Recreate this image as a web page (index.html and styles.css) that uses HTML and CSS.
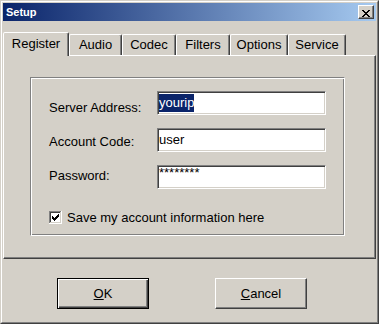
FILE: index.html
```html
<!DOCTYPE html>
<html lang="en">
<head>
    <meta charset="UTF-8">
    <title>Setup</title>
    <link rel="stylesheet" href="styles.css">
</head>
<body>
    <div class="window">
        <div class="frame">
            <div class="titlebar">
                <span class="title">Setup</span>
                <button class="close-button" title="Close">
                    <svg width="8" height="7" viewBox="0 0 8 7" shape-rendering="crispEdges">
                        <path fill="#000" d="M0 0h2v1H0zM6 0h2v1H6zM1 1h2v1H1zM5 1h2v1H5zM2 2h4v1H2zM3 3h2v1H3zM2 4h4v1H2zM1 5h2v1H1zM5 5h2v1H5zM0 6h2v1H0zM6 6h2v1H6z"/>
                    </svg>
                </button>
            </div>

            <div class="tabs">
                <div class="tab tab-register active">Register</div>
                <div class="tab tab-audio">Audio</div>
                <div class="tab tab-codec">Codec</div>
                <div class="tab tab-filters">Filters</div>
                <div class="tab tab-options">Options</div>
                <div class="tab tab-service">Service</div>
            </div>

            <div class="panel">
                <div class="group">
                    <div class="fields">
                        <div class="labels">
                            <label for="server">Server Address:</label>
                            <label for="account">Account Code:</label>
                            <label for="password">Password:</label>
                        </div>
                        <div class="edits">
                            <div class="edit" id="server"><span class="selected">yourip</span></div>
                            <div class="edit" id="account">user</div>
                            <div class="edit masked" id="password">********</div>
                        </div>
                    </div>
                    <div class="check-row">
                        <svg class="checkbox" width="13" height="13" viewBox="0 0 13 13" shape-rendering="crispEdges">
                            <path fill="#808080" d="M0 0h12v1H1v11H0z"/>
                            <path fill="#404040" d="M1 1h10v1H2v9H1z"/>
                            <path fill="#fff" d="M12 0h1v13H0v-1h12z"/>
                            <path fill="#D4D0C8" d="M11 1h1v11H1v-1h10z"/>
                            <rect x="2" y="2" width="9" height="9" fill="#fff"/>
                            <path fill="#000" d="M3 5h1v3H3zM4 6h1v3H4zM5 7h1v3H5zM6 6h1v3H6zM7 5h1v3H7zM8 4h1v3H8zM9 3h1v3H9z"/>
                        </svg>
                        <span>Save my account information here</span>
                    </div>
                </div>
            </div>

            <div class="buttons">
                <button class="btn btn-default"><u>O</u>K</button>
                <button class="btn"><u>C</u>ancel</button>
            </div>
        </div>
    </div>
</body>
</html>
```

FILE: styles.css
```css
* {
    margin: 0;
    padding: 0;
    box-sizing: border-box;
}
body {
    font-family: "Liberation Sans", Arial, sans-serif;
    font-size: 13px;
    color: #000;
    background: #D4D0C8;
    overflow: hidden;
}
.window {
    width: 379px;
    height: 324px;
    background: #D4D0C8;
    border: 1px solid;
    border-color: #D4D0C8 #404040 #404040 #D4D0C8;
}
.frame {
    height: 100%;
    border: 1px solid;
    border-color: #fff #808080 #808080 #fff;
    padding: 1px;
    display: flex;
    flex-direction: column;
}
/* Title bar */
.titlebar {
    flex: none;
    height: 18px;
    background: linear-gradient(to right, #0A246A, #A6CAF0);
    display: flex;
    align-items: center;
    justify-content: space-between;
    padding: 0 2px 0 3px;
}
.title {
    color: #fff;
    font-weight: bold;
    font-size: 11px;
    line-height: 18px;
}
.close-button {
    display: block;
    width: 16px;
    height: 14px;
    background: #D4D0C8;
    border: 1px solid;
    border-color: #fff #404040 #404040 #fff;
    box-shadow: inset -1px -1px #808080;
    padding: 2px 0 0 3px;
}
.close-button svg {
    display: block;
}
/* Tabs */
.tabs {
    flex: none;
    display: flex;
    align-items: flex-end;
    height: 23px;
    margin-top: 11px;
}
.tab {
    position: relative;
    height: 21px;
    border: 1px solid;
    border-bottom: none;
    border-color: #fff #404040 transparent #fff;
    border-radius: 2px 2px 0 0;
    box-shadow: inset -1px 0 #808080;
    padding-top: 2px;
    line-height: 15px;
    text-align: center;
    white-space: nowrap;
}
.tab.active {
    height: 24px;
    margin-bottom: -1px;
    padding-top: 3px;
    background: #D4D0C8;
    z-index: 1;
}
.tab-register { width: 66px; }
.tab-audio { width: 53px; }
.tab-codec { width: 54px; }
.tab-filters { width: 54px; }
.tab-options { width: 58px; }
.tab-service { width: 58px; }
.panel {
    flex: none;
    height: 204px;
    border: 1px solid;
    border-color: #fff #404040 #404040 #fff;
    box-shadow: inset -1px -1px #808080;
    padding: 21px 0 0 26px;
}
.group {
    width: 315px;
    height: 159px;
    border: 1px solid;
    border-color: #808080 #fff #fff #808080;
    box-shadow: inset 1px 1px #fff, inset -1px -1px #808080;
    padding-left: 18px;
}
.fields {
    display: flex;
}
.labels {
    width: 108px;
    display: flex;
    flex-direction: column;
    gap: 19px;
    padding-top: 22px;
    line-height: 15px;
}
.edits {
    display: flex;
    flex-direction: column;
    gap: 13px;
    padding-top: 13px;
}
.edit {
    width: 169px;
    height: 24px;
    background: #fff;
    border: 1px solid;
    border-color: #808080 #fff #fff #808080;
    box-shadow: inset 1px 1px #404040, inset -1px -1px #D4D0C8;
    padding: 2px 0 0 1px;
    line-height: 18px;
    white-space: nowrap;
    overflow: hidden;
}
.edit.masked {
    line-height: 10px;
}
.selected {
    display: inline-block;
    background: #0A246A;
    color: #fff;
}
.check-row {
    display: flex;
    align-items: center;
    gap: 5px;
    margin-top: 21px;
    line-height: 15px;
}
.checkbox {
    display: block;
    flex: none;
}
/* Dialog buttons */
.buttons {
    flex: none;
    display: flex;
    gap: 66px;
    padding-left: 54px;
    margin-top: 19px;
}
.btn {
    width: 92px;
    height: 31px;
    font-family: "Liberation Sans", Arial, sans-serif;
    font-size: 13px;
    color: #000;
    background: #D4D0C8;
    border: 1px solid;
    border-color: #fff #404040 #404040 #fff;
    box-shadow: inset -1px -1px #808080;
}
.btn-default {
    border-color: #000;
    box-shadow: inset 1px 1px #fff, inset -1px -1px #404040, inset -2px -2px #808080;
}
```
